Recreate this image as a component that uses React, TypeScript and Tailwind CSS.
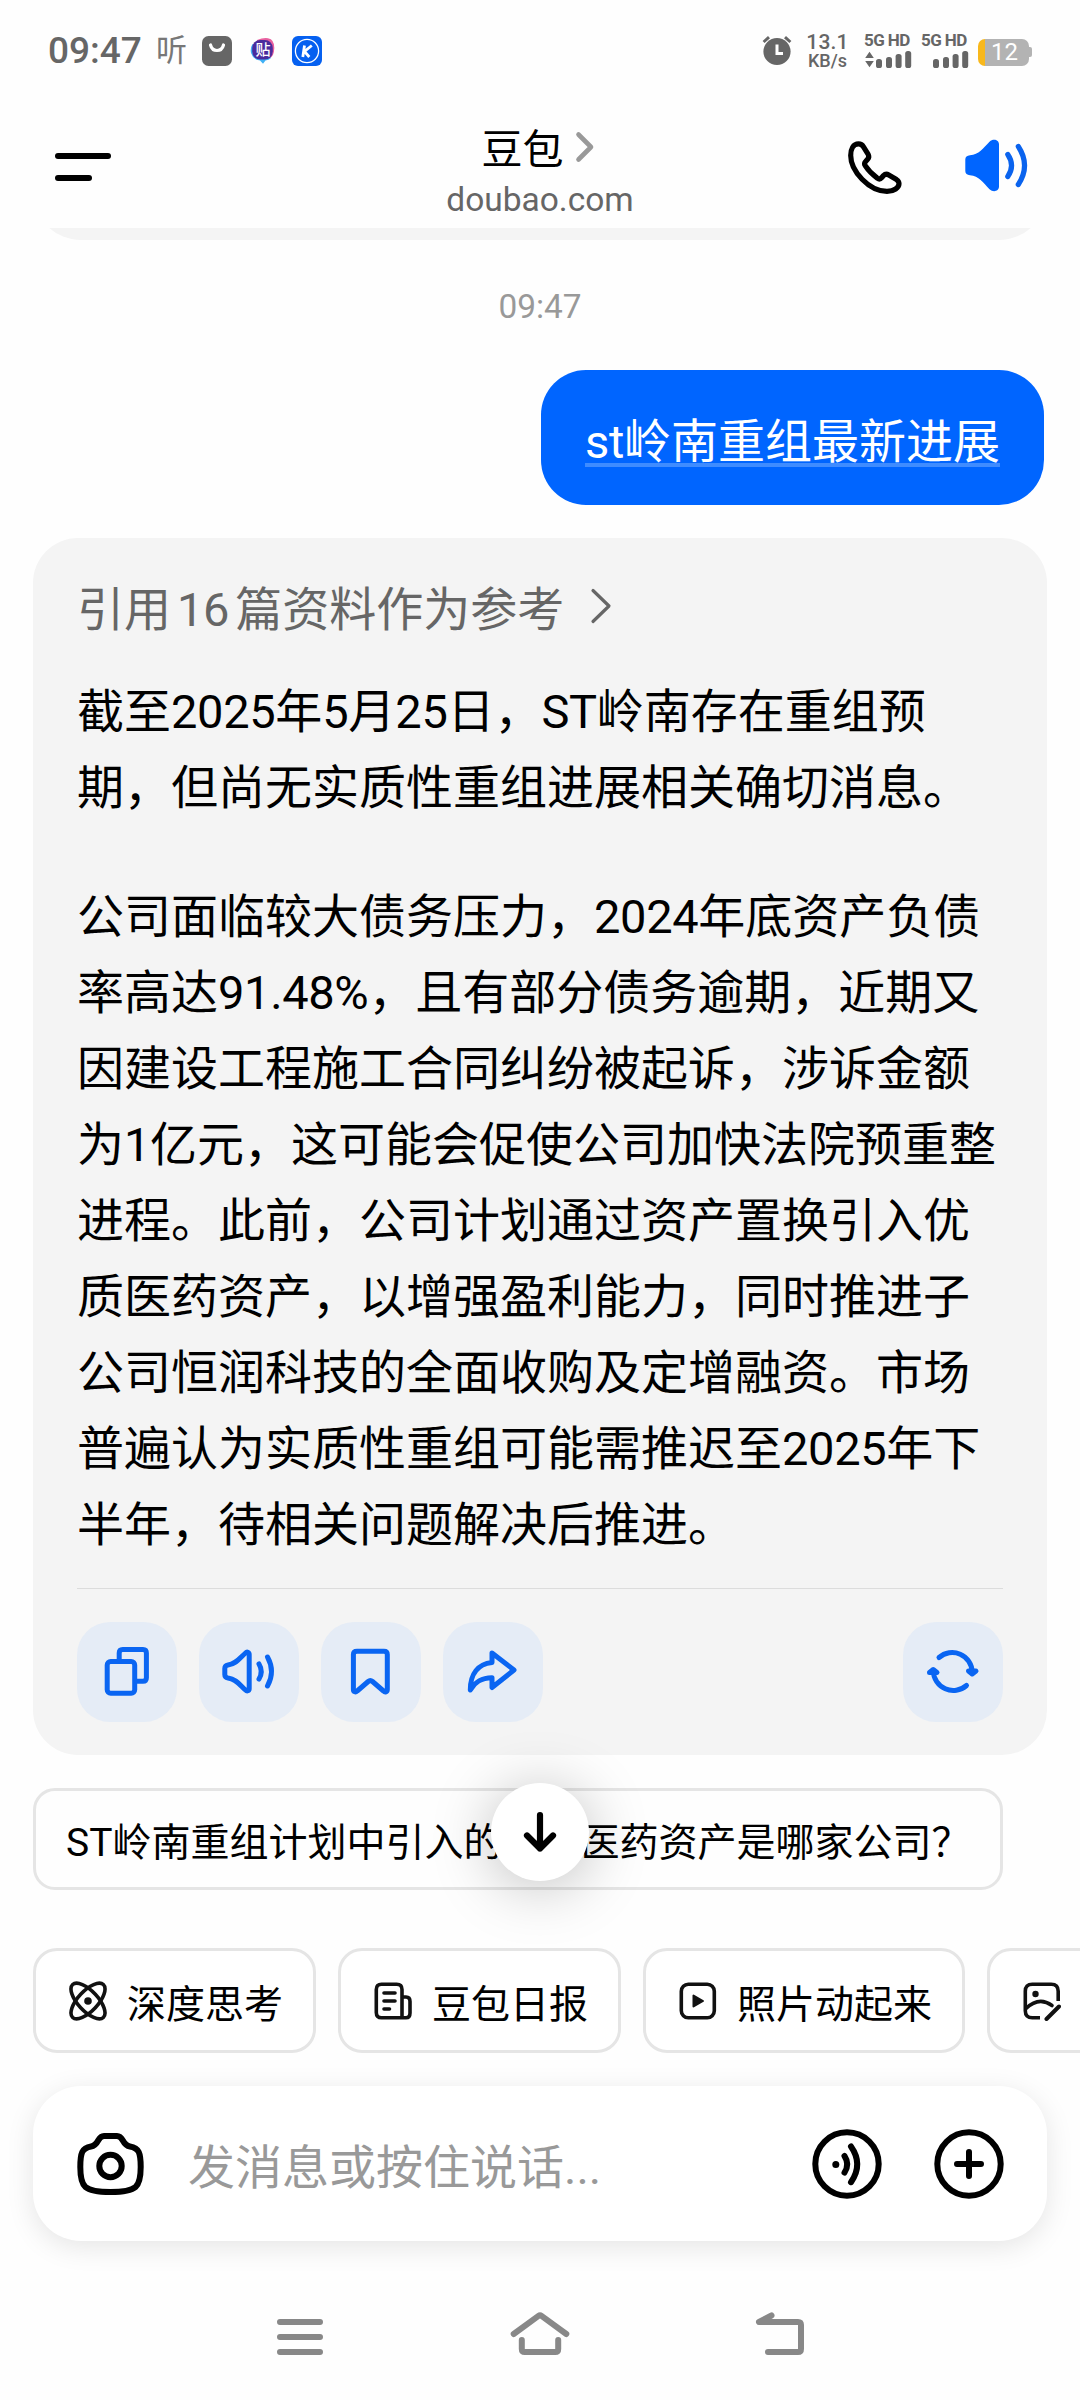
import React from "react";

const FONT = "font-[Roboto,'Noto_Sans_CJK_SC',sans-serif]";

const AlarmIcon = () => (
  <svg width="32" height="32" viewBox="0 0 32 32" className="block">
    <circle cx="16" cy="17.5" r="13.6" fill="#666" />
    <path d="M16 10.5V19.5H22" stroke="#fff" strokeWidth="3" fill="none" />
    <path d="M2.6 8 8 3.2M29.4 8 24 3.2" stroke="#666" strokeWidth="3" />
  </svg>
);

const Bars = ({ arrows = false }: { arrows?: boolean }) => (
  <svg width="48" height="17" viewBox="0 0 48 17" className="block" fill="#666">
    {arrows && <path d="M1.2 7 5.5 .8 9.8 7ZM1.2 10 5.5 16.2 9.8 10Z" />}
    <rect x="12" y="8" width="6" height="9" rx="2.6" />
    <rect x="22" y="6" width="6" height="11" rx="2.6" />
    <rect x="31.6" y="3" width="6" height="14" rx="2.6" />
    <rect x="41.2" y="0" width="6" height="17" rx="2.6" />
  </svg>
);

const PhoneIcon = () => (
  <svg width="60" height="60" viewBox="0 0 60 60" fill="none" stroke="#000" strokeWidth="5.2" strokeLinejoin="round">
    <path d="M13.5 5.9C8.2 5.9 5.7 11 5.7 17.5C5.7 33 24 53.4 42 53.4C49 53.4 54 49.5 54 45.8C54 44 53 42.6 51.5 41.6L43.8 37C41.8 35.8 40 36 38.5 37.5L36.8 39.5C35.4 41.2 34 41.4 32.3 40.2C28 37 23 32 20.2 27.7C19.2 26.1 19.3 24.9 20.6 23.5L22.6 21.2C24 19.6 24.2 18.2 23.2 16.4L18.5 8.8C17.3 6.8 15.8 5.9 13.5 5.9Z" />
  </svg>
);

const SpeakerSolid = () => (
  <svg width="70" height="60" viewBox="0 0 70 60" fill="none">
    <path d="M10 20.3C19 19.8 23 13.5 29.5 6.8C33 3.4 39 4.5 39 9.5V51.5C39 56.5 33 57.6 29.5 54.2C23 47.5 19 40.7 10 40.2C7 40 5.3 38.6 5.3 36V24.5C5.3 22 7 20.5 10 20.3Z" fill="#0065ff" />
    <path d="M47.8 19.5Q55.3 30.5 47.8 41.5M58.3 11.5Q70.8 30.5 58.3 49.5" stroke="#0a63ee" strokeWidth="5.2" strokeLinecap="round" />
  </svg>
);

const Action = ({ children }: { children: React.ReactNode }) => (
  <button className="size-[100px] shrink-0 rounded-[33px] bg-[#e5ecf6]">
    <svg width="100" height="100" viewBox="0 0 100 100" fill="none" stroke="#0a65f2" strokeWidth="5" strokeLinecap="round" strokeLinejoin="round">
      {children}
    </svg>
  </button>
);

const Chip = ({ icon, label }: { icon: React.ReactNode; label?: string }) => (
  <div className="flex h-[105px] min-w-[160px] shrink-0 items-center rounded-[24px] border-[3px] border-[#e5e5e5] bg-white pl-[31px] pr-[30px]">
    <svg width="40" height="40" viewBox="0 0 40 40" fill="none" stroke="#111" strokeWidth="3.6" strokeLinecap="round" strokeLinejoin="round" className="mr-5 shrink-0">
      {icon}
    </svg>
    {label && <span className="mt-[8px] whitespace-nowrap text-[39px] leading-[50px] text-black">{label}</span>}
  </div>
);

/* One line of text whose Latin letters and digits are set slightly tighter. */
const Line = ({ text }: { text: string }) => (
  <span className="block">
    {text.split(/([A-Za-z0-9.%]+)/).map((part, i) =>
      i % 2 ? <span key={i} className="tracking-[-0.35px]">{part}</span> : part,
    )}
  </span>
);

const paragraph1 = ["截至2025年5月25日，ST岭南存在重组预", "期，但尚无实质性重组进展相关确切消息。"];

const paragraph2 = [
  "公司面临较大债务压力，2024年底资产负债",
  "率高达91.48%，且有部分债务逾期，近期又",
  "因建设工程施工合同纠纷被起诉，涉诉金额",
  "为1亿元，这可能会促使公司加快法院预重整",
  "进程。此前，公司计划通过资产置换引入优",
  "质医药资产，以增强盈利能力，同时推进子",
  "公司恒润科技的全面收购及定增融资。市场",
  "普遍认为实质性重组可能需推迟至2025年下",
  "半年，待相关问题解决后推进。",
];

export default function App() {
  return (
    <div className={`${FONT} flex h-[2400px] w-[1080px] flex-col overflow-hidden bg-[#fefefe] text-black`}>
      {/* Status bar */}
      <div className="flex h-[100px] shrink-0 items-center justify-between pl-[48px] pr-[48px]">
        <div className="flex items-center pt-[2px]">
          <span className="w-[108px] text-[37px] font-medium leading-[40px] text-[#666]">09:47</span>
          <span className="w-[46px] text-[31px] leading-[40px] text-[#777]">听</span>
          <svg width="30" height="30" viewBox="0 0 30 30" className="mr-[17px]">
            <rect width="30" height="30" rx="6.5" fill="#666" />
            <path d="M8.500 9Q10 14.500 15 14.500T21.500 9" stroke="#fff" strokeWidth="3.2" strokeLinecap="round" fill="none" />
          </svg>
          <div className="relative mr-[15px] flex h-[30px] w-[28px] items-start justify-center">
            <svg width="28" height="30" viewBox="0 0 28 30" className="absolute inset-0">
              <path d="M8 4Q14 1.500 19 2.200Q25.500 3.500 25.300 12Q25 20 21 22L12 20Z" fill="#e8609f" />
              <path d="M3.500 8Q1 12 2 17Q4 23.500 11 24.500L14 27.800 16.500 24.500Q20 24 22 22L12 12Z" fill="#3fb0f5" />
              <rect x="3.200" y="4" width="20.600" height="19.600" rx="8" fill="#4a2c9d" />
            </svg>
            <span className="relative mt-[5px] text-[15px] font-medium leading-[18px] text-white">贴</span>
          </div>
          <svg width="30" height="30" viewBox="0 0 30 30">
            <rect width="30" height="30" rx="6" fill="#0560f0" />
            <circle cx="15" cy="15" r="11.600" stroke="#fff" strokeWidth="1.300" fill="none" />
            <path d="M12.500 9.500 10.800 21M19.800 9.500 12.500 15.400 17.300 21" stroke="#fff" strokeWidth="2.800" fill="none" />
          </svg>
        </div>
        <div className="flex items-center text-[#666]">
          <div className="mr-[15px]"><AlarmIcon /></div>
          <div className="mr-[17px] mt-[2px] flex w-[39px] flex-col items-center font-medium">
            <span className="text-[21px] leading-[18px] tracking-[0.2px]">13.1</span>
            <span className="mt-[2px] text-[18px] leading-[16px]">KB/s</span>
          </div>
          <div className="mr-[9px] flex w-[48px] flex-col">
            <span className="mb-[3px] whitespace-nowrap text-[17px] font-bold leading-[15px] tracking-[-0.6px]">5G HD</span>
            <Bars arrows />
          </div>
          <div className="mr-[9px] flex w-[48px] flex-col">
            <span className="mb-[3px] whitespace-nowrap text-[17px] font-bold leading-[15px] tracking-[-0.6px]">5G HD</span>
            <Bars />
          </div>
          <div className="mt-1 flex items-center">
            <div className="flex h-[27px] w-[51px] items-center justify-center overflow-hidden rounded-[7px] bg-[linear-gradient(to_right,#f8b81c_7px,#b3b3b3_7px)]">
              <span className="pl-[2px] text-[24px] leading-[27px] text-white">12</span>
            </div>
            <div className="h-[10px] w-[3px] rounded-r-[2px] bg-[#b3b3b3]" />
          </div>
        </div>
      </div>

      {/* Header */}
      <div className="grid h-[128px] shrink-0 grid-cols-[1fr_auto_1fr] pl-[55px] pr-[50px]">
        <div className="flex flex-col gap-[16px] pt-[53px]">
          <div className="h-[6px] w-[56px] rounded-full bg-black" />
          <div className="h-[6px] w-[37px] rounded-full bg-black" />
        </div>
        <div className="-ml-[5px] flex flex-col items-center">
          <div className="mt-[20px] flex items-center pr-[3px]">
            <span className="text-[41px] leading-[60px]">豆包</span>
            <svg width="22" height="34" viewBox="0 0 22 34" className="-mt-[7px] ml-[10px]" fill="none" stroke="#999" strokeWidth="4.600" strokeLinecap="round" strokeLinejoin="round">
              <path d="M4.500 4.500 17 17 4.500 29.500" />
            </svg>
          </div>
          <span className="text-[33.500px] leading-[40px] text-[#666]">doubao.com</span>
        </div>
        <div className="flex items-start justify-end pt-[36px]">
          <div className="mr-[55px] mt-[2px]"><PhoneIcon /></div>
          <div className="-mt-[1px]"><SpeakerSolid /></div>
        </div>
      </div>

      {/* Tail of the previous message */}
      <div className="mx-[33px] flex h-3 shrink-0 items-end overflow-hidden">
        <div className="h-[100px] w-full shrink-0 rounded-[48px] bg-[#f4f4f4]" />
      </div>

      <div className="mt-[46px] text-center text-[33.400px] leading-[42px] text-[#999]">09:47</div>

      {/* Question */}
      <div className="mr-[36px] mt-[42px] flex h-[135px] shrink-0 self-end rounded-[45px] bg-[#0065ff] px-[44px] pt-[42px]">
        <div className="relative h-[55px]">
          <div className="absolute bottom-0 left-0 h-1 w-full bg-[#3f8cff]" />
          <div className="relative whitespace-nowrap text-[47px] leading-[60px] text-white">
            <Line text="st岭南重组最新进展" />
          </div>
        </div>
      </div>

      {/* Answer */}
      <div className="mx-[33px] mt-[33px] flex h-[1217px] shrink-0 flex-col rounded-[45px] bg-[#f4f4f4] px-[44px] pt-[34px]">
        <div className="flex h-[76px] items-center whitespace-nowrap text-[47px] leading-[76px] text-[#666]">
          <span>引用</span>
          <span className="mx-[6px] tracking-[-0.35px]">16</span>
          <span>篇资料作为参考</span>
          <svg width="24" height="40" viewBox="0 0 24 40" className="-mt-[8px] ml-[25px]" fill="none" stroke="#666" strokeWidth="3.200" strokeLinecap="round" strokeLinejoin="round">
            <path d="M4 4.500 20 20 4 35.500" />
          </svg>
        </div>
        <div className="mt-[26px] whitespace-nowrap text-[47px] leading-[76px]">
          {paragraph1.map((line) => <Line key={line} text={line} />)}
        </div>
        <div className="mt-[53px] whitespace-nowrap text-[47px] leading-[76px]">
          {paragraph2.map((line) => <Line key={line} text={line} />)}
        </div>
        <div className="mt-[25px] h-px shrink-0 bg-[#dcdcdc]" />
        <div className="mt-[33px] flex gap-[22px]">
          <Action>
            <rect x="30.200" y="39.500" width="27.500" height="31.700" rx="3.500" />
            <path d="M42.200 38V31Q42.200 27.500 45.700 27.500H66Q69.400 27.500 69.400 31V55.700Q69.400 59.200 66 59.200H60" />
          </Action>
          <Action>
            <path d="M29 43C37 42 41 36 46.500 31C48 29.500 50.200 30 50.200 32.500V66.500C50.200 69 48 69.500 46.500 68C41 63 37 57 29 56Q25.800 55.500 25.800 52.500V46.500Q25.800 43.500 29 43Z" />
            <path d="M60 42Q64.500 49.500 60 57M68.500 35Q76.500 49.500 68.500 64" />
          </Action>
          <Action>
            <path d="M36 29.200H63Q66.300 29.200 66.300 32.500V67.500C66.300 70 64 70.500 62.500 69L51.500 59.500Q49.300 57.700 47.200 59.500L36.200 69C34.600 70.500 32.400 70 32.400 67.500V32.500Q32.400 29.200 36 29.200Z" />
          </Action>
          <Action>
            <path d="M49 31 71 48 49 65.500V55.700C38 56 32 60 27.300 68C27.300 52 35 42 49 40.500Z" />
          </Action>
          <div className="ml-auto">
            <Action>
              <path d="M36 35.500A20 20 0 0 1 69.200 50M63.500 63.500A20 20 0 0 1 30.300 49" />
              <path d="M65.500 49 69.200 52 73 49ZM26.500 50.500 30.200 47.500 34 50.500Z" fill="#0a65f2" />
            </Action>
          </div>
        </div>
      </div>

      {/* Suggested follow-up with the scroll-down button over it */}
      <div className="relative mt-[33px] h-[102px] shrink-0">
        <div className="ml-[33px] flex h-[102px] w-[970px] items-center rounded-[22px] border-[3px] border-[#e5e5e5] pl-[30px]">
          <span className="mt-[7px] whitespace-nowrap text-[39px] leading-[50px]">ST岭南重组计划中引入的优质医药资产是哪家公司？</span>
        </div>
        <div className="absolute -top-[5px] left-1/2 flex size-[98px] -translate-x-1/2 items-center justify-center rounded-full bg-white shadow-[0_6px_60px_rgba(0,0,0,0.25)]">
          <svg width="40" height="44" viewBox="0 0 40 44" fill="none" stroke="#000" strokeWidth="6.200" strokeLinecap="round" strokeLinejoin="round">
            <path d="M20 5V38.500M7 25.500 20 38.500 33 25.500" />
          </svg>
        </div>
      </div>

      {/* Shortcuts */}
      <div className="mt-[58px] flex shrink-0 gap-[22px] overflow-hidden pl-[33px]">
        <Chip
          label="深度思考"
          icon={
            <>
              <ellipse cx="21" cy="20" rx="22.500" ry="10" transform="rotate(47 21 20)" />
              <ellipse cx="21" cy="20" rx="22.500" ry="10" transform="rotate(-47 21 20)" />
              <circle cx="21" cy="20" r="3.800" fill="#111" stroke="none" />
            </>
          }
        />
        <Chip
          label="豆包日报"
          icon={
            <>
              <path d="M30 36.800H9.500Q4.300 36.800 4.300 31.500V8.500Q4.300 3.300 9.500 3.300H24.700Q30 3.300 30 8.500V36.800ZM30 16H34Q38 16 38 20.500V32Q38 36.800 34 36.800H30" />
              <path d="M12 12H23M12 20H23M12 28H17.500" />
            </>
          }
        />
        <Chip
          label="照片动起来"
          icon={
            <>
              <rect x="4.300" y="3.300" width="33" height="33.500" rx="7" />
              <path d="M16.500 14.500V25.500L26 20Z" fill="#111" strokeWidth="2" />
            </>
          }
        />
        <Chip
          icon={
            <>
              <path d="M19 36.800H11.300Q4.300 36.800 4.300 29.800V10.300Q4.300 3.300 11.300 3.300H30.200Q37.200 3.300 37.200 10.300V20" strokeLinecap="butt" />
              <path d="M5 27.500Q18 15 31 24.500" />
              <path d="M38 25.500 25.500 38" strokeWidth="4" />
              <circle cx="14.500" cy="13" r="3.200" fill="#111" stroke="none" />
            </>
          }
        />
      </div>

      {/* Composer */}
      <div className="mx-[33px] mt-[33px] flex h-[155px] shrink-0 items-center rounded-[48px] bg-white pl-[44px] pr-[43px] shadow-[0_6px_28px_rgba(0,0,0,0.1)]">
        <svg width="67" height="70" viewBox="0 0 67 70" fill="none" stroke="#000" strokeWidth="6" className="shrink-0">
          <path d="M27 7H40C47 7 44.500 16 53 17.500C62 19 63.700 24 63.700 38C63.700 58 60 63 33.500 63C7 63 3.300 58 3.300 38C3.300 24 5 19 14 17.500C22.500 16 20 7 27 7Z" />
          <circle cx="33.500" cy="37" r="11.200" />
        </svg>
        <span className="ml-[44px] mt-[8px] flex-1 whitespace-nowrap text-[47px] leading-[60px] text-[#999]">发消息或按住说话...</span>
        <svg width="70" height="70" viewBox="0 0 70 70" fill="none" stroke="#000" strokeWidth="6" strokeLinecap="round" className="mr-[52px] shrink-0">
          <circle cx="35" cy="35" r="31.700" />
          <circle cx="23.800" cy="35.500" r="3.500" fill="#000" stroke="none" />
          <path d="M32.500 27Q38 35.300 32.500 43.600M39 17.500Q51.500 35.300 39 53.200" />
        </svg>
        <svg width="70" height="70" viewBox="0 0 70 70" fill="none" stroke="#000" strokeWidth="6" strokeLinecap="round" className="shrink-0">
          <circle cx="35" cy="35" r="31.700" />
          <path d="M23 35H47M35 23V47" />
        </svg>
      </div>

      {/* System navigation */}
      <div className="mt-[65px] flex shrink-0 items-center justify-center gap-[180px]">
        <svg width="60" height="56" viewBox="0 0 60 56" stroke="#888" strokeWidth="6" strokeLinecap="round">
          <path d="M10 16H50M10 31H50M10 46H50" />
        </svg>
        <svg width="60" height="56" viewBox="0 0 60 56" fill="none" stroke="#888" strokeWidth="6" strokeLinecap="round" strokeLinejoin="round">
          <path d="M3.700 28 28.500 9.800Q30 8.700 31.500 9.800L56.300 28" />
          <path d="M11.800 34V43Q11.800 46 14.800 46H45.200Q48.200 46 48.200 43V34" />
        </svg>
        <svg width="60" height="56" viewBox="0 0 60 56" fill="none" stroke="#888" strokeWidth="6" strokeLinecap="round" strokeLinejoin="round">
          <path d="M21.500 9.500 9 16H48Q51 16 51 19V43Q51 46 48 46H18" />
        </svg>
      </div>
    </div>
  );
}
